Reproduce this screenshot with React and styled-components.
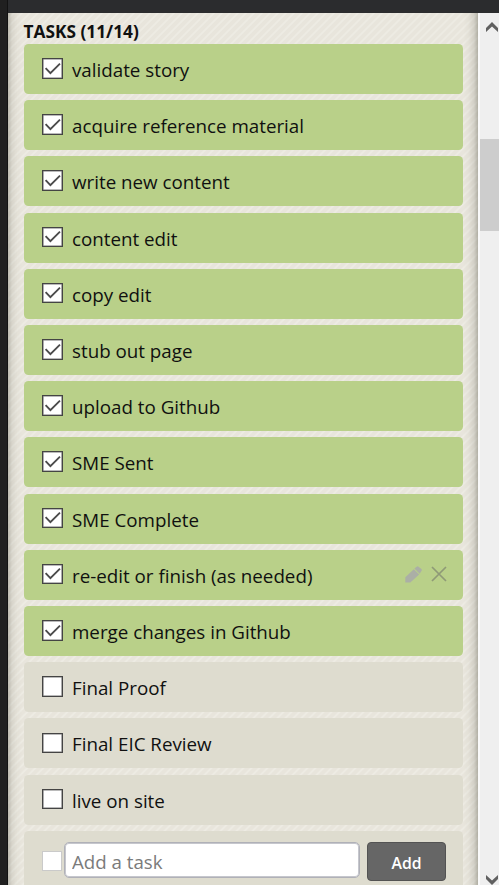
import React, { useState } from "react";
import styled, { createGlobalStyle } from "styled-components";

const GlobalStyle = createGlobalStyle`
  * { box-sizing: border-box; }
  html, body { margin: 0; padding: 0; overflow: hidden; }
  body { font-family: "Open Sans", sans-serif; color: #101010; }
`;

const Page = styled.div`
  width: 499px;
  height: 885px;
  overflow: hidden;
  display: grid;
  grid-template-columns: 8px 470px 21px;
  grid-template-rows: 12.5px 1fr;
  background: #2b2c2e;
`;

const LeftEdge = styled.div`
  grid-row: 1 / 3;
  background: #202020;
  border-right: 1px solid #121212;
`;

const TopBar = styled.div`
  grid-column: 2 / 4;
  background: #2b2c2e;
`;

const Panel = styled.main`
  min-height: 0;
  overflow: hidden;
  padding: 7.5px 15px 0 15.5px;
  background:
    linear-gradient(to right, rgba(70, 70, 55, 0.28), rgba(70, 70, 55, 0.1) 4px, rgba(70, 70, 55, 0.03) 9px, transparent 14px),
    linear-gradient(to left, rgba(70, 70, 55, 0.34), rgba(70, 70, 55, 0.14) 4px, rgba(70, 70, 55, 0.04) 9px, transparent 14px),
    repeating-linear-gradient(135deg, #e8e5dc 0 2.8px, #edebe3 3.8px 4.6px, #e8e5dc 5.66px);
`;

const Heading = styled.h1`
  margin: 0;
  height: 24px;
  font-size: 17.3px;
  line-height: 23px;
  font-weight: 700;
  white-space: nowrap;
`;

const TaskList = styled.ul`
  list-style: none;
  margin: 0;
  padding: 0;
  display: flex;
  flex-direction: column;
  gap: 6.2px;
`;

const TaskRow = styled.li`
  flex: none;
  height: 50.03px;
  padding: 0 16px 0 18.5px;
  display: flex;
  align-items: center;
  border-radius: 4.5px;
  background: ${({ $done }) => ($done ? "#b9d089" : "#dedccf")};
`;

const CheckBox = styled.button`
  flex: none;
  width: 20.5px;
  height: 20.5px;
  padding: 0;
  margin: 0 9.5px 1.4px 0;
  display: grid;
  place-items: center;
  border: 1px solid #444;
  box-shadow: inset 0 0 0 0.6px #777;
  border-radius: 0;
  background: #fff;
`;

const DisabledBox = styled.span`
  flex: none;
  width: 20px;
  height: 20px;
  margin: 0 2px 0 0;
  border: 1px solid #cacaca;
  background: #fff;
`;

const Label = styled.span`
  flex: 1;
  font-size: 18.77px;
  line-height: 26px;
  padding-top: 2px;
  white-space: nowrap;
`;

const Actions = styled.span`
  display: flex;
  gap: 9px;
  align-items: center;
  margin-bottom: 1px;
`;

const AddRow = styled(TaskRow)`
  height: 60px;
  padding-right: 17px;
`;

const TaskInput = styled.input`
  width: 295.5px;
  height: 36px;
  margin: 0 7.5px 2px 0;
  padding: 3px 6px 0 7px;
  border: 1px solid #b0b1b8;
  box-shadow: inset 0 0 0 1px #c6c7cd;
  border-radius: 5px;
  background: #fff;
  font: 18.7px/26px "Open Sans", sans-serif;
  outline: none;
  &::placeholder { color: #7b7b7b; opacity: 1; }
`;

const AddButton = styled.button`
  width: 79px;
  height: 39px;
  margin-top: 2px;
  padding: 3px 0 0;
  border: 1.5px solid #535353;
  border-radius: 4px;
  background: #666;
  color: #fff;
  font: 600 15.8px/22px "Open Sans", sans-serif;
`;

const Scrollbar = styled.aside`
  display: flex;
  flex-direction: column;
  justify-content: space-between;
  border-left: 2px solid #fafafa;
  background: #efefef;
  overflow: hidden;
`;

const ScrollArrow = styled.div`
  flex: none;
  height: ${({ $up }) => ($up ? "16px" : "10px")};
  margin-top: ${({ $up }) => ($up ? "9px" : "0")};
  padding-left: 5.8px;
  display: flex;
`;

const ScrollThumb = styled.div`
  height: 92px;
  margin: 101.5px 0 auto;
  flex: none;
  background: #cdcdcd;
`;

const Tick = () => (
  <svg width="17.5" height="17.5" viewBox="0 0 17.5 17.5" fill="none" stroke="#4b4b4b" strokeWidth="1.9">
    <path d="M1.6 8.2 6.4 13.2 16 3.6" />
  </svg>
);

const Pencil = () => (
  <svg width="17" height="17" viewBox="0 0 17 17" fill="#abafa6">
    <path d="M.3 16.6V11.2L8.8 3.2 14.2 8.4 5.3 16.6Z" />
    <path d="m9.4 2.6 2.2-1.9q1-.8 2 0l2.8 2.4q1 1 0 2l-1.7 2.7Z" />
  </svg>
);

const Cross = () => (
  <svg width="16" height="16" viewBox="0 0 16 16" fill="none" stroke="#8f9a77" strokeWidth="1.7">
    <path d="m1 1 14 14M15 1 1 15" />
  </svg>
);

const Chevron = ({ down }) => (
  <svg width="12" height="11" viewBox="0 0 12 11" fill="#606060">
    <path d={down ? "M0 0 6 5.4 12 0V4L6 10 0 4Z" : "M0 10 6 4.6 12 10V6L6 0 0 6Z"} />
  </svg>
);

const initialTasks = [
  ["validate story", true],
  ["acquire reference material", true],
  ["write new content", true],
  ["content edit", true],
  ["copy edit", true],
  ["stub out page", true],
  ["upload to Github", true],
  ["SME Sent", true],
  ["SME Complete", true],
  ["re-edit or finish (as needed)", true],
  ["merge changes in Github", true],
  ["Final Proof", false],
  ["Final EIC Review", false],
  ["live on site", false],
].map(([title, done]) => ({ title, done }));

export default function App() {
  const [tasks, setTasks] = useState(initialTasks);
  const toggle = (index) =>
    setTasks((list) => list.map((task, i) => (i === index ? { ...task, done: !task.done } : task)));
  const doneCount = tasks.filter((task) => task.done).length;

  return (
    <>
      <GlobalStyle />
      <Page>
        <LeftEdge />
        <TopBar />
        <Panel>
          <Heading>{`TASKS (${doneCount}/${tasks.length})`}</Heading>
          <TaskList>
            {tasks.map((task, index) => (
              <TaskRow key={task.title} $done={task.done}>
                <CheckBox
                  role="checkbox"
                  aria-checked={task.done}
                  aria-label={task.title}
                  onClick={() => toggle(index)}
                >
                  {task.done && <Tick />}
                </CheckBox>
                <Label>{task.title}</Label>
                {index === 9 && (
                  <Actions>
                    <Pencil />
                    <Cross />
                  </Actions>
                )}
              </TaskRow>
            ))}
            <AddRow>
              <DisabledBox />
              <TaskInput placeholder="Add a task" />
              <AddButton>Add</AddButton>
            </AddRow>
          </TaskList>
        </Panel>
        <Scrollbar>
          <ScrollArrow $up>
            <Chevron />
          </ScrollArrow>
          <ScrollThumb />
          <ScrollArrow>
            <Chevron down />
          </ScrollArrow>
        </Scrollbar>
      </Page>
    </>
  );
}
